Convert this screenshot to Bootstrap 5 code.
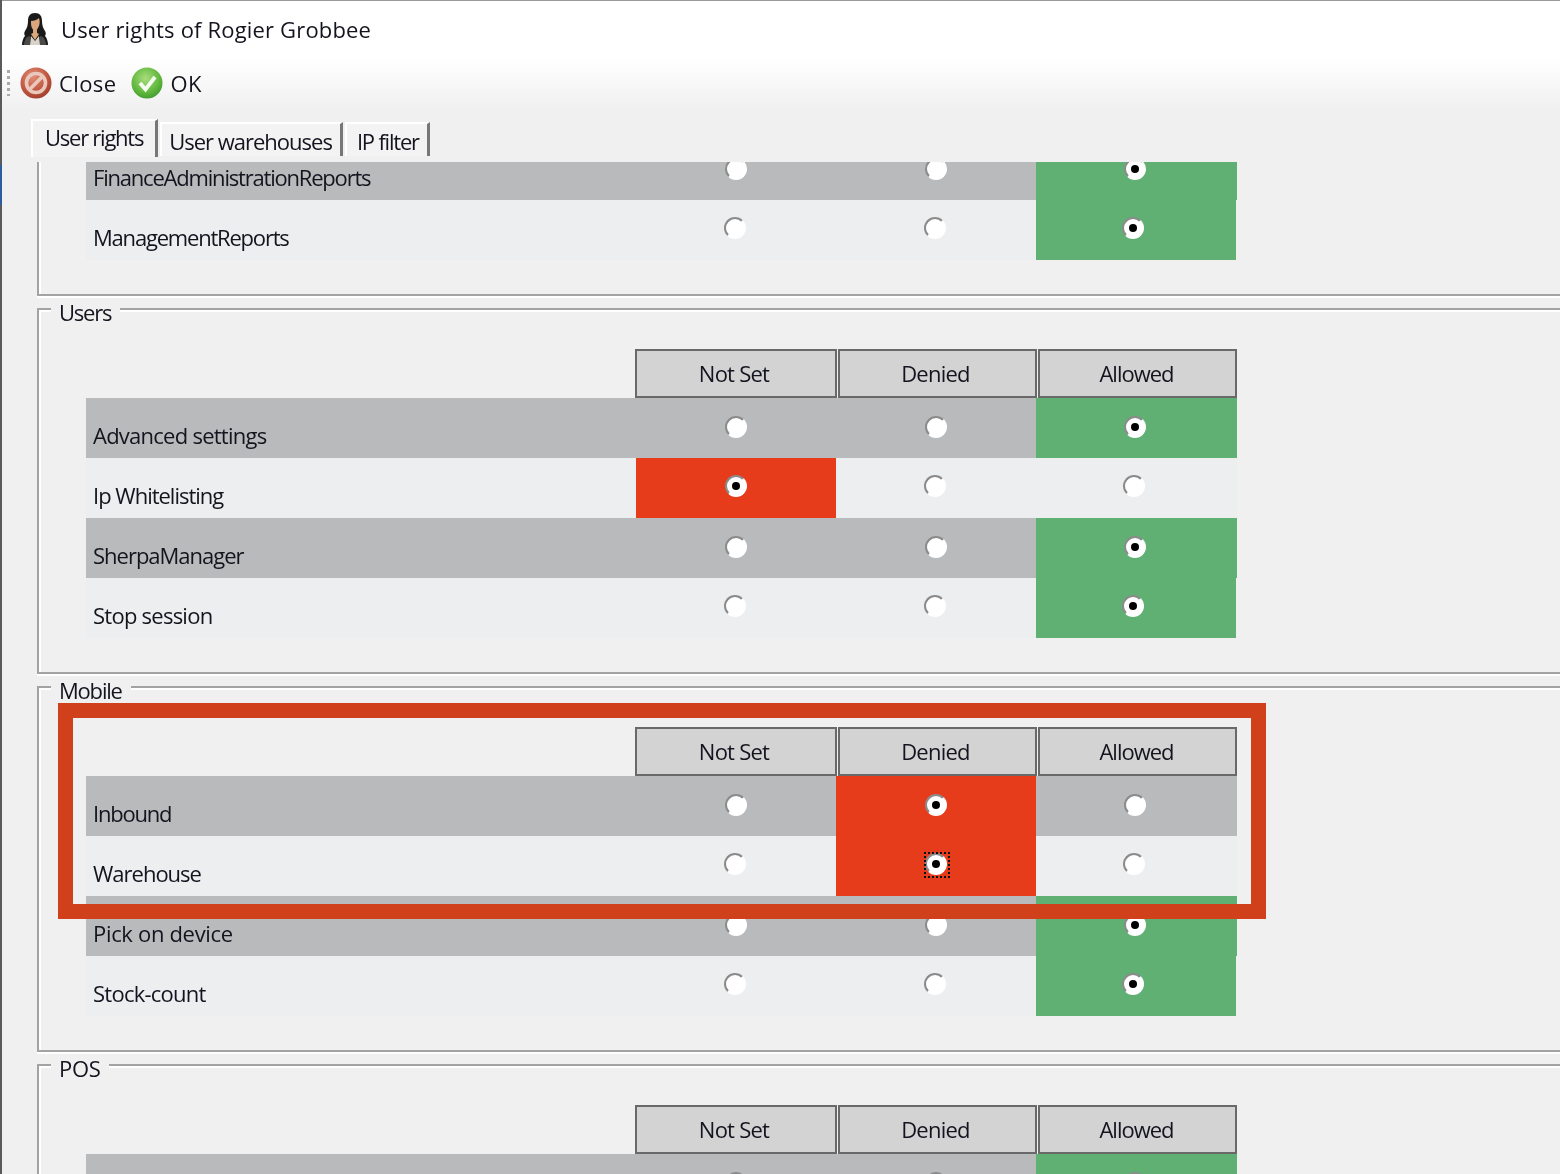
<!DOCTYPE html>
<html lang="en">
<head>
<meta charset="utf-8">
<title>User rights</title>
<link rel="stylesheet" href="https://cdn.jsdelivr.net/npm/bootstrap@5.3.0/dist/css/bootstrap.min.css">
<style>
html,body{height:100%;}
body{position:relative;overflow:hidden;background:linear-gradient(#5a5a5a 0,#5a5a5a 165px,#2b5d9f 165px,#2b5d9f 205px,#5a5a5a 205px);color:#14141f;font-family:"Open Sans","Liberation Sans",sans-serif;font-size:22px;line-height:30px;letter-spacing:-.75px;}
.win{height:1174px;margin-left:2px;border-top:1px solid #9a9a9a;background:#f0f0f0;filter:blur(.35px);}
.headband{height:121px;background:linear-gradient(#fff 0,#fff 58px,#f0f0f0 108px);}
.titleline{height:58px;padding:0 0 2px 19px;}
.titletext{letter-spacing:.17px;margin-left:12px;}
.toolline{height:52px;padding:0 0 5px 5px;}
.grip{width:3px;height:26px;margin-right:10px;background:repeating-linear-gradient(#a9a9a9 0 3px,transparent 3px 6px);}
.toolbtn{letter-spacing:.4px;margin-right:15px;}
.toolbtn svg{margin-right:7px;}
.tabstrip{height:40px;padding-left:29px;}
.tabitem{height:34px;padding:0 8px 0 7px;background:#f3f3f3;border-top:2px solid #fff;border-left:2px solid #fff;border-right:3px solid #777;margin-left:2px;line-height:34px;letter-spacing:-1px;}
.tabitem.isactive{height:38px;margin:-3px 0 0;padding:0 12px;line-height:32px;letter-spacing:-1.25px;}
.tabitem.tablast{padding-left:10px;padding-right:8px;letter-spacing:-1.2px;}
.pane{height:1013px;overflow:hidden;padding-left:35px;}
.gbox{width:1600px;height:366px;margin-bottom:12px;padding-left:47px;border:2px solid #a3a3a3;box-shadow:inset 2px 2px 0 #fff,0 2px 0 #fff;}
.gbox.cutoff{height:134px;border-top:0;box-shadow:inset 2px 0 0 #fff,0 2px 0 #fff;}
.gtitle{display:block;width:fit-content;height:23px;margin:-10px 0 0 -35px;padding:0 9px 0 8px;background:#f0f0f0;line-height:24px;}
.grights{display:grid;grid-template-columns:550px 200px 200px 201px;width:1151px;margin-top:26px;}
.cutoff .grights{margin-top:0;}
.chead{height:49px;margin:0 -1px 0 2px;padding-right:4px;background:#d3d3d3;border:2px solid #696969;line-height:45px;text-align:center;}
.chead.cfirst{margin-left:-1px;}
.chead.clast{margin-right:0;padding-right:2px;letter-spacing:-1px;}
.rlabel,.rcell{height:60px;}
.rlabel{padding:22px 0 0 7px;line-height:30px;white-space:nowrap;}
.rcell{display:flex;justify-content:center;padding-top:18px;}
.rshift{padding-right:4px;}
.rup{padding-top:17px;}
.tone-d{background:#b9babc;}
.tone-l{background:#edeef0;}
.tone-l.rcell{padding-top:17px;padding-right:2px;}
.tone-l.rshift{padding-right:6px;}
.is-red{background:#e63c1c;}
.is-green{background:#60b073;}
.is-green.tone-l{margin-right:1px;}
.toprow{height:38px;}
.toprow.rcell{padding-top:0;}
.toprow .rdo{margin-top:-4px;}
.toprow.rlabel{padding-top:0;}
.ls-t1{letter-spacing:-1.2px;}
.ls-t2{letter-spacing:-1px;}
.ls-w{letter-spacing:-.32px;}
.rdo{position:relative;display:block;width:22px;height:22px;border-radius:50%;background:#fff;border:2px solid;border-color:#8b8b8b #fff #fff #8b8b8b;}
.on::after{content:"";position:absolute;left:5px;top:5px;width:8px;height:8px;border-radius:50%;background:#000;}
.hasfocus::before{content:"";position:absolute;left:-3px;top:-3px;width:26px;height:26px;border:2px dotted #06131a;}
.callout{position:absolute;left:58px;top:703px;width:1208px;height:216px;border:15px solid #d0401a;pointer-events:none;}
</style>
</head>
<body>
<div class="win d-flex flex-column">
  <div class="headband">
    <div class="titleline d-flex align-items-center">
      <svg width="28" height="34" viewBox="0 0 28 34"><path d="M14 1C9 1 7 4 7 9c0 4-1 7-3 10-1 2-1 3 0 5-2 2-3 6-3 9h26c0-3-1-7-3-9 1-2 1-3 0-5-2-3-3-6-3-10 0-5-2-8-7-8z" fill="#1b1a1a"/><path d="M10 9c3 0 6-1 8-3 1 3 1 7-1 10-1 2-2 3-3 3s-2-1-3-3c-1-2-1-4-1-7z" fill="#d9a67e"/><path d="M12 18h4v3l2 1-4 6-4-6 2-1z" fill="#d9a67e"/><path d="M10 24l4 5 4-5 1 9H9z" fill="#d8d2c8"/><path d="M3 33c0-3 1-6 3-8l3-1v9zM25 33c0-3-1-6-3-8l-3-1v9z" fill="#4a4a4a"/></svg>
      <span class="titletext">User rights of Rogier Grobbee</span>
    </div>
    <div class="toolline d-flex align-items-center">
      <span class="grip"></span>
      <span class="toolbtn d-flex align-items-center"><svg width="32" height="32" viewBox="0 0 32 32"><defs><radialGradient id="gradred" cx=".4" cy=".3" r=".8"><stop offset="0" stop-color="#e08f78"/><stop offset=".6" stop-color="#c0553f"/><stop offset="1" stop-color="#96392a"/></radialGradient></defs><circle cx="16" cy="16" r="15.5" fill="url(#gradred)"/><circle cx="16" cy="16" r="9.5" fill="none" stroke="#eac9bd" stroke-width="3.6"/><path d="M9 23L23 9" stroke="#eac9bd" stroke-width="3.6"/></svg>Close</span>
      <span class="toolbtn d-flex align-items-center"><svg width="32" height="32" viewBox="0 0 32 32"><defs><radialGradient id="gradgreen" cx=".45" cy=".35" r=".8"><stop offset="0" stop-color="#a9dd7c"/><stop offset=".6" stop-color="#5cb53a"/><stop offset="1" stop-color="#33882a"/></radialGradient></defs><circle cx="16" cy="16" r="15.5" fill="url(#gradgreen)"/><path d="M9 16l5.500 6.500L24 10" fill="none" stroke="#f4fbef" stroke-width="3.800"/></svg>OK</span>
    </div>
  </div>
  <div class="tabstrip d-flex align-items-start">
    <div class="tabitem isactive">User rights</div>
    <div class="tabitem">User warehouses</div>
    <div class="tabitem tablast">IP filter</div>
  </div>
  <div class="pane">
    <div class="gbox cutoff">
      <div class="grights">
        <div class="rlabel toprow tone-d ls-t1">FinanceAdministrationReports</div>
        <div class="rcell toprow tone-d"><span class="rdo"></span></div>
        <div class="rcell toprow tone-d"><span class="rdo"></span></div>
        <div class="rcell toprow rshift is-green"><span class="rdo on"></span></div>
        <div class="rlabel tone-l ls-t1">ManagementReports</div>
        <div class="rcell tone-l"><span class="rdo"></span></div>
        <div class="rcell tone-l"><span class="rdo"></span></div>
        <div class="rcell tone-l rshift is-green"><span class="rdo on"></span></div>
      </div>
    </div>
    <div class="gbox">
      <span class="gtitle ls-t1">Users</span>
      <div class="grights">
        <div></div><div class="chead cfirst">Not Set</div><div class="chead">Denied</div><div class="chead clast">Allowed</div>
        <div class="rlabel tone-d">Advanced settings</div>
        <div class="rcell tone-d"><span class="rdo"></span></div>
        <div class="rcell tone-d"><span class="rdo"></span></div>
        <div class="rcell rshift is-green"><span class="rdo on"></span></div>
        <div class="rlabel tone-l ls-t2">Ip Whitelisting</div>
        <div class="rcell rup is-red"><span class="rdo on"></span></div>
        <div class="rcell tone-l"><span class="rdo"></span></div>
        <div class="rcell tone-l rshift"><span class="rdo"></span></div>
        <div class="rlabel tone-d ls-t2">SherpaManager</div>
        <div class="rcell tone-d"><span class="rdo"></span></div>
        <div class="rcell tone-d"><span class="rdo"></span></div>
        <div class="rcell rshift is-green"><span class="rdo on"></span></div>
        <div class="rlabel tone-l">Stop session</div>
        <div class="rcell tone-l"><span class="rdo"></span></div>
        <div class="rcell tone-l"><span class="rdo"></span></div>
        <div class="rcell tone-l rshift is-green"><span class="rdo on"></span></div>
      </div>
    </div>
    <div class="gbox">
      <span class="gtitle ls-t1">Mobile</span>
      <div class="grights">
        <div></div><div class="chead cfirst">Not Set</div><div class="chead">Denied</div><div class="chead clast">Allowed</div>
        <div class="rlabel tone-d ls-t1">Inbound</div>
        <div class="rcell tone-d"><span class="rdo"></span></div>
        <div class="rcell is-red"><span class="rdo on"></span></div>
        <div class="rcell tone-d rshift"><span class="rdo"></span></div>
        <div class="rlabel tone-l ls-t2">Warehouse</div>
        <div class="rcell tone-l"><span class="rdo"></span></div>
        <div class="rcell rup is-red"><span class="rdo on hasfocus"></span></div>
        <div class="rcell tone-l rshift"><span class="rdo"></span></div>
        <div class="rlabel tone-d ls-w">Pick on device</div>
        <div class="rcell tone-d"><span class="rdo"></span></div>
        <div class="rcell tone-d"><span class="rdo"></span></div>
        <div class="rcell rshift is-green"><span class="rdo on"></span></div>
        <div class="rlabel tone-l">Stock-count</div>
        <div class="rcell tone-l"><span class="rdo"></span></div>
        <div class="rcell tone-l"><span class="rdo"></span></div>
        <div class="rcell tone-l rshift is-green"><span class="rdo on"></span></div>
      </div>
    </div>
    <div class="gbox">
      <span class="gtitle ls-w">POS</span>
      <div class="grights">
        <div></div><div class="chead cfirst">Not Set</div><div class="chead">Denied</div><div class="chead clast">Allowed</div>
        <div class="rlabel tone-d"></div>
        <div class="rcell tone-d"><span class="rdo"></span></div>
        <div class="rcell tone-d"><span class="rdo"></span></div>
        <div class="rcell rshift is-green"><span class="rdo on"></span></div>
      </div>
    </div>
  </div>
</div>
<div class="callout"></div>
<script src="https://cdn.jsdelivr.net/npm/bootstrap@5.3.0/dist/js/bootstrap.bundle.min.js"></script>
</body>
</html>
